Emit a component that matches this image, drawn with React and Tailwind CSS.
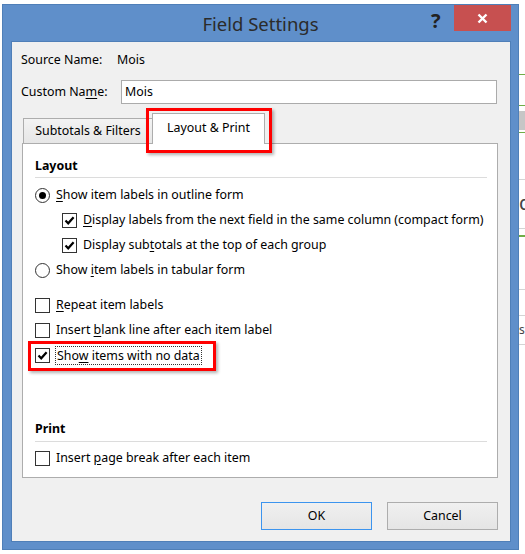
import React from "react";

const font = { fontFamily: '"Noto Sans", "Open Sans", sans-serif' };

function CheckBox({ checked }) {
  return (
    <span className="flex h-[15px] w-[15px] shrink-0 items-center justify-center border border-[#333333] bg-white">
      {checked && (
        <svg width="11" height="11" viewBox="0 0 11 11">
          <path d="M1.5 5.5 L4.2 8.3 L9.6 2.2" fill="none" stroke="#000" strokeWidth="2.2" />
        </svg>
      )}
    </span>
  );
}

function Radio({ checked }) {
  return (
    <span className="flex h-[15px] w-[15px] shrink-0 items-center justify-center rounded-full border border-[#333333] bg-white">
      {checked && <span className="h-[7px] w-[7px] rounded-full bg-black" />}
    </span>
  );
}

// label with one underlined access key
function Label({ pre, k, post }) {
  return (
    <span className="whitespace-nowrap">
      {pre}
      <span className="underline underline-offset-2">{k}</span>
      {post}
    </span>
  );
}

function Row({ indent, children, control }) {
  return (
    <div className={`flex h-[25px] items-center gap-[6px] ${indent ? "pl-[27px]" : ""}`}>
      {control}
      {children}
    </div>
  );
}

export default function App() {
  return (
    <div className="flex h-[554px] w-[525px] overflow-hidden bg-white text-[12.4px] text-black" style={font}>
      <div className="ml-[2px] mt-[4px] flex h-[546px] w-[517px] shrink-0 flex-col border border-[#4f7fb8] bg-[#5f8fca]">
        {/* title bar */}
        <div className="relative flex h-[36px] shrink-0 items-center justify-center pt-[2px]">
          <span className="text-[18.5px] text-[#2b2b2b]">Field Settings</span>
          <span className="absolute left-[428px] top-[3px] text-[20px] font-bold leading-[26px] text-[#222]">?</span>
          <div className="absolute right-[7px] top-0 flex h-[26px] w-[57px] items-center justify-center bg-[#c75050]">
            <svg width="11" height="11" viewBox="0 0 11 11">
              <path d="M1.5 1.5 L9.5 9.5 M9.5 1.5 L1.5 9.5" stroke="#fff" strokeWidth="2.4" />
            </svg>
          </div>
        </div>

        {/* client area */}
        <div className="ml-[8px] mr-[7px] flex flex-1 flex-col border border-[#4f7fb8] bg-[#f0f0f0] pl-[9px] pr-[11px]">
          <div className="mt-[8px] flex h-[20px] items-center">
            <span className="w-[96px]">Source Name:</span>
            <span>Mois</span>
          </div>
          <div className="mt-[10px] flex items-center">
            <span className="w-[100px]">
              Custom Na<span className="underline underline-offset-2">m</span>e:
            </span>
            <div className="flex h-[24px] w-[376px] items-center border border-[#ababab] bg-white pl-[3px]">Mois</div>
          </div>

          {/* tabs */}
          <div className="mt-[9px] flex h-[30px] items-end pl-[2px]">
            <div className="flex h-[25px] w-[129px] items-center justify-center border border-b-0 border-r-0 border-[#adadad] bg-gradient-to-b from-[#f3f3f3] to-[#e6e6e6] pt-px">
              Subtotals &amp; Filters
            </div>
            <div className="relative z-10 -mb-px flex h-[31px] w-[113px] items-center justify-center border border-b-0 border-[#adadad] bg-white pb-px">
              Layout &amp; Print
              <div className="absolute left-[-7px] top-[-6px] h-[45px] w-[126px] border-[3px] border-[#ff0000] shadow-[2px_2px_3px_rgba(0,0,0,0.3)]" />
            </div>
          </div>

          {/* panel */}
          <div className="ml-px mr-px flex h-[335px] flex-col border border-[#adadad] bg-white pl-[12px] pr-[10px] pt-[12px]">
            <div className="flex h-[20px] items-center font-bold">Layout</div>
            <div className="mt-[1px] h-px bg-[#dcdcdc]" />
            <div className="mt-[5px]">
              <Row control={<Radio checked />}>
                <Label pre="" k="S" post="how item labels in outline form" />
              </Row>
              <Row indent control={<CheckBox checked />}>
                <Label pre="" k="D" post="isplay labels from the next field in the same column (compact form)" />
              </Row>
              <Row indent control={<CheckBox checked />}>
                <Label pre="Display sub" k="t" post="otals at the top of each group" />
              </Row>
              <Row control={<Radio />}>
                <Label pre="Show " k="i" post="tem labels in tabular form" />
              </Row>
            </div>
            <div className="mt-[10px]">
              <Row control={<CheckBox />}>
                <Label pre="" k="R" post="epeat item labels" />
              </Row>
              <Row control={<CheckBox />}>
                <Label pre="Insert " k="b" post="lank line after each item label" />
              </Row>
              <div className="relative flex h-[25px] items-center gap-[5px]">
                <CheckBox checked />
                <span className="border border-dotted border-[#333] px-px leading-[17px]">
                  <Label pre="Sho" k="w" post=" items with no data" />
                </span>
                <div className="absolute left-[-7px] top-[-2px] h-[30px] w-[188px] border-[3px] border-[#ff0000] shadow-[2px_2px_3px_rgba(0,0,0,0.3)]" />
              </div>
            </div>
            <div className="mt-[51px] flex h-[20px] items-center font-bold">Print</div>
            <div className="mt-[2px] h-px bg-[#dcdcdc]" />
            <div className="mt-[4px]">
              <Row control={<CheckBox />}>
                <Label pre="Insert " k="p" post="age break after each item" />
              </Row>
            </div>
          </div>

          {/* buttons */}
          <div className="mt-[24px] flex justify-end gap-[15px] pr-px">
            <button className="h-[28px] w-[111px] border border-[#3c94ee] bg-gradient-to-b from-[#f0f0f0] to-[#e5e5e5]">OK</button>
            <button className="h-[28px] w-[111px] border border-[#adadad] bg-gradient-to-b from-[#f0f0f0] to-[#e5e5e5]">Cancel</button>
          </div>
        </div>
        <div className="h-[7px] shrink-0" />
      </div>

      {/* bit of the sheet behind the dialog */}
      <div className="flex w-[6px] shrink-0 flex-col">
        <div className="h-[74px]" />
        <div className="h-px bg-[#70ad47]" />
        <div className="h-[30px]" />
        <div className="h-px bg-[#70ad47]" />
        <div className="h-[5px]" />
        <div className="h-[19px] bg-[#c6c6c6]" />
        <div className="h-[2px]" />
        <div className="h-px bg-[#70ad47]" />
        <div className="h-[46px]" />
        <div className="h-px bg-[#d4d4d4]" />
        <div className="h-[12px]" />
        <div className="h-[22px] text-[20px] leading-[22px] text-[#444]">d</div>
        <div className="h-[14px]" />
        <div className="h-px bg-[#d4d4d4]" />
        <div className="h-[6px]" />
        <div className="h-[2px] bg-[#70ad47]" />
        <div className="h-[52px]" />
        <div className="h-px bg-[#d4d4d4]" />
        <div className="h-[25px]" />
        <div className="h-px bg-[#d4d4d4]" />
        <div className="h-[28px] text-[12px] leading-[28px] text-[#444]">s</div>
        <div className="h-px bg-[#d4d4d4]" />
      </div>
    </div>
  );
}
